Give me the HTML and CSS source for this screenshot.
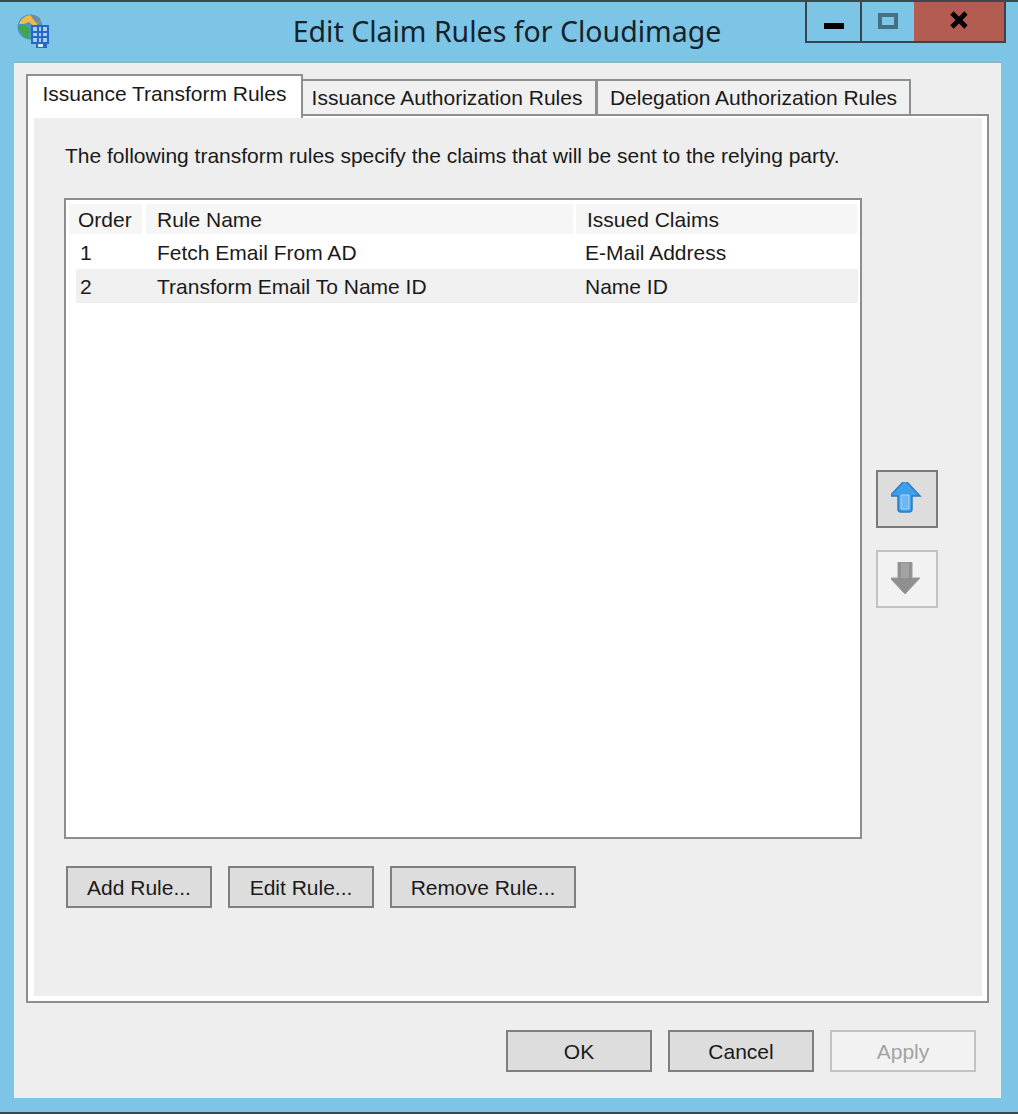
FILE: index.html
```html
<!DOCTYPE html>
<html lang="en">
<head>
<meta charset="utf-8">
<title>Edit Claim Rules for Cloudimage</title>
<link rel="stylesheet" href="styles.css">
</head>
<body>
<div class="window">
  <header class="titlebar">
    <svg class="app-icon" width="36" height="36" viewBox="0 0 36 36">
      <circle cx="14" cy="14" r="12.5" fill="#4a94c8"/>
      <path d="M3 11C6 4 11 2 16 2c4 0 7 2 9 5l-6 7-6-5-5 2z" fill="#f0bb46"/>
      <path d="M14 2c4-1 9 1 11 5l-4 4z" fill="#6b8fa8"/>
      <path d="M2 14l6-3 6 6-2 6 3 3c-6 0-11-5-13-12z" fill="#3fa84d"/>
      <path d="M15 12h18v19h-2v4H20v-4h-5z" fill="#2768c6"/>
      <path d="M17 14h4v4h-4zM23 14h2v4h-2zM27 14h4v4h-4zM17 20h4v3h-4zM23 20h2v3h-2zM27 20h4v3h-4zM17 25h4v4h-4zM23 25h2v4h-2zM27 25h4v4h-4z" fill="#a9cdf2"/>
      <path d="M22 31h5v3h-5z" fill="#dcebfa"/>
    </svg>
    <h1 class="title">Edit Claim Rules for Cloudimage</h1>
    <div class="controls">
      <div class="ctl ctl-min"><span class="min-glyph"></span></div>
      <div class="ctl ctl-max"><span class="max-glyph"></span></div>
      <div class="ctl ctl-close">
        <svg width="20" height="18" viewBox="0 0 20 18"><path d="M3 2l14 14M17 2L3 16" stroke="#000" stroke-width="4.6" fill="none"/></svg>
      </div>
    </div>
  </header>

  <main class="dialog">
    <nav class="tabs">
      <div class="tab tab-active">Issuance Transform Rules</div>
      <div class="tab tab-second">Issuance Authorization Rules</div>
      <div class="tab tab-third">Delegation Authorization Rules</div>
    </nav>
    <section class="pane">
      <div class="pane-inner">
        <p class="intro">The following transform rules specify the claims that will be sent to the relying party.</p>
        <div class="list-area">
          <div class="list">
            <div class="list-head">
              <div class="hcell h-order">Order</div>
              <div class="hcell h-name">Rule Name</div>
              <div class="hcell h-claims">Issued Claims</div>
            </div>
            <div class="row">
              <div class="c-order">1</div>
              <div class="c-name">Fetch Email From AD</div>
              <div class="c-claims">E-Mail Address</div>
            </div>
            <div class="row row-alt">
              <div class="c-order">2</div>
              <div class="c-name">Transform Email To Name ID</div>
              <div class="c-claims">Name ID</div>
            </div>
          </div>
          <div class="arrows">
            <div class="arrow-btn">
              <svg width="32" height="34" viewBox="2 5 32 34"><path d="M16 3L31 19H23V32Q23 35 20 35H12Q9 35 9 32V19H1z" fill="#3f9fea" stroke="#2c7cc4" stroke-width="1.5"/><path d="M12 18h8v14h-8z" fill="#6db8f3" stroke="#a6d6f8" stroke-width="1"/></svg>
            </div>
            <div class="arrow-btn arrow-off">
              <svg width="32" height="34" viewBox="2 3 32 34"><path d="M9 3H23V19H31L16 35 1 19H9z" fill="#8f8f8f" stroke="#9c9c9c" stroke-width="1"/><path d="M12 4h8v15h-8z" fill="#a3a3a3"/></svg>
            </div>
          </div>
        </div>
        <div class="rule-buttons">
          <button class="btn btn-rule">Add Rule...</button>
          <button class="btn btn-rule">Edit Rule...</button>
          <button class="btn btn-remove">Remove Rule...</button>
        </div>
      </div>
    </section>
    <footer class="actions">
      <button class="btn btn-rule">OK</button>
      <button class="btn btn-rule">Cancel</button>
      <button class="btn btn-rule btn-off">Apply</button>
    </footer>
  </main>
</div>
</body>
</html>
```
FILE: styles.css
```css
* { box-sizing: border-box; }
html, body { margin: 0; padding: 0; }
body { font-family: "Liberation Sans", Arial, sans-serif; font-size: 21px; color: #1a1a1a; }
.window {
  width: 1018px; height: 1114px;
  background: #7dc5e6;
  border-top: 2px solid #3e474c;
  border-bottom: 2px solid #3e474c;
  display: flex; flex-direction: column;
}
.titlebar { height: 59px; display: flex; align-items: flex-start; padding-left: 16px; flex: none; }
.app-icon { margin-top: 11px; flex: none; }
.title {
  margin: 10px 0 0 0; width: 753px; padding-left: 157px; text-align: center;
  font-family: "Noto Sans", sans-serif; font-weight: 400; font-size: 28.5px; line-height: 38px; color: #15232c;
  white-space: nowrap;
}
.controls {
  display: flex; height: 41px; width: 201px; flex: none;
  border: 2px solid #37454e; border-top: 0;
}
.ctl { display: flex; align-items: center; justify-content: center; }
.ctl-min { width: 55px; border-right: 2px solid #37454e; }
.ctl-max { width: 52px; }
.ctl-close { flex: 1; background: #b35c52; }
.min-glyph { width: 20px; height: 6px; background: #000; margin-top: 8px; }
.max-glyph { width: 20px; height: 16px; border: 4px solid #44707f; margin-top: -2px; }
.ctl-close svg { margin-top: -3px; }

.dialog {
  margin: 0 17px 14px 14px; flex: 1;
  background: #eeeeee; border-top: 2px solid #8fb4c8;
  padding: 11px 12px 0 12px;
  display: flex; flex-direction: column;
}
.tabs { display: flex; align-items: flex-end; height: 40px; flex: none; }
.tab {
  border: 2px solid #8d9092; border-bottom: 0; background: #f0f0f0;
  height: 35px; line-height: 33px; text-align: center;
}
.tab-active {
  width: 277px; height: 44px; line-height: 35px; margin-bottom: -4px;
  background: #fff; z-index: 1;
}
.tab-second { width: 295px; margin-left: -1px; border-left-width: 0; padding-right: 3px; }
.tab-third { width: 315px; margin-left: -1px; }

.pane { width: 963px; height: 889px; border: 2px solid #8d9092; background: #fff; padding: 2px 5px 5px 6px; flex: none; }
.pane-inner { height: 100%; background: #eeeeee; padding: 0 0 0 30px; }
.intro { margin: 0; height: 80px; padding: 25px 0 0 1px; line-height: 26px; }
.list-area { display: flex; gap: 14px; }
.list { width: 798px; height: 641px; border: 2px solid #8b8d8e; background: #fff; padding: 4px 3px 0 3px; }
.list-head { display: flex; height: 31px; }
.hcell { background: #f6f6f6; height: 30px; line-height: 32px; padding-left: 9px; }
.h-order { width: 73px; margin-right: 4px; }
.h-name { width: 427px; margin-right: 3px; padding-left: 11px; }
.h-claims { width: 281px; padding-left: 11px; }
.row { display: flex; height: 34px; line-height: 35px; margin-left: 7px; width: 782px; }
.row-alt { background: #f0f0f0; }
.c-order { width: 70px; padding-left: 4px; }
.c-name { width: 429px; padding-left: 11px; }
.c-claims { padding-left: 10px; }

.arrows { display: flex; flex-direction: column; gap: 22px; padding-top: 272px; }
.arrow-btn {
  width: 62px; height: 58px; background: #dddddd; border: 2px solid #7a7a7a;
  display: flex; align-items: center; justify-content: center;
}
.arrow-off { background: #f2f2f2; border-color: #c2c2c2; }

.rule-buttons { display: flex; gap: 16px; margin: 27px 0 0 2px; }
.btn {
  font: inherit; color: inherit; height: 42px; padding: 2px 0 0 0;
  background: #dddddd; border: 2px solid #7f7f7f; border-radius: 0;
}
.btn-rule { width: 146px; }
.btn-remove { width: 186px; }
.btn-off { background: #f2f2f2; border-color: #c2c2c2; color: #a3a3a3; }

.actions { display: flex; justify-content: flex-end; gap: 16px; margin-top: 27px; padding-right: 13px; }
```
